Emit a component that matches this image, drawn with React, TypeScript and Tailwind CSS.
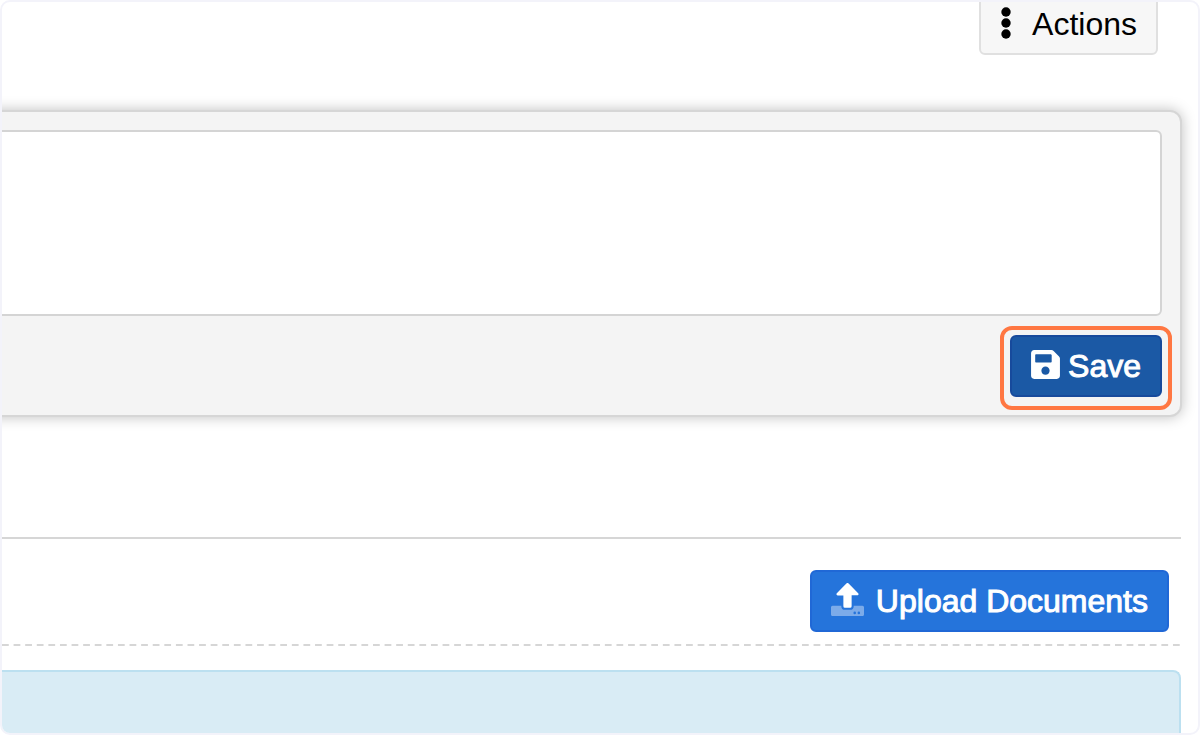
import { FaSave } from "react-icons/fa";

function DotsIcon() {
  return (
    <svg className="mb-[3px] w-3 h-8 shrink-0" viewBox="0 0 12 32" fill="currentColor" aria-hidden="true">
      <circle cx="6" cy="5" r="4.7" />
      <circle cx="6" cy="16" r="4.7" />
      <circle cx="6" cy="27" r="4.7" />
    </svg>
  );
}

function UploadIcon() {
  return (
    <svg className="mb-[3px] w-[33px] h-[33px] shrink-0" viewBox="0 0 512 512" fill="currentColor" aria-hidden="true">
      <path
        opacity="0.4"
        d="M488 352H352v8a56 56 0 0 1-56 56h-80a56 56 0 0 1-56-56v-8H24a24 24 0 0 0-24 24v112a24 24 0 0 0 24 24h464a24 24 0 0 0 24-24V376a24 24 0 0 0-24-24zM368 484a20 20 0 1 1 20-20 20 20 0 0 1-20 20zm64 0a20 20 0 1 1 20-20 20 20 0 0 1-20 20z"
      />
      <path d="M192 360V192h-87.700c-17.800 0-26.700-21.500-14.100-34.100L242.300 5.600a19.400 19.400 0 0 1 27.300 0l152.200 152.200c12.600 12.600 3.700 34.100-14.100 34.100H320v168a24 24 0 0 1-24 24h-80a24 24 0 0 1-24-24z" />
    </svg>
  );
}

export default function App() {
  return (
    <div className="min-h-screen flex flex-col overflow-hidden rounded-[10px] border-2 border-[#f3f3fa] bg-white font-['Liberation_Sans',Arial,sans-serif] text-[32px] leading-10">
      {/* Toolbar */}
      <header className="flex justify-end pr-10">
        <button
          type="button"
          className="-mt-[9px] h-[62px] flex items-center gap-5 rounded-md border-2 border-[#e0e0e0] bg-[#f7f7f7] px-[19px] text-black"
        >
          <DotsIcon />
          Actions
        </button>
      </header>

      {/* Note editor, bleeds off the left edge */}
      <form
        className="mt-[55px] mr-4 -ml-6 rounded-r-xl border-2 border-[#d6d6d6] bg-[#f4f4f4] py-[18px] pr-[18px] shadow-[0_0_14px_rgba(0,0,0,0.25)]"
        onSubmit={(e) => e.preventDefault()}
      >
        <textarea
          aria-label="Note"
          className="block w-full h-[186px] resize-none rounded-r-md border-2 border-[#d4d4d4] bg-white py-4 pr-4 pl-10 outline-none"
        />
        <div className="mt-[19px] flex justify-end">
          <div className="relative">
            <button
              type="submit"
              className="h-[62px] flex items-center gap-2 rounded-md border-2 border-[#174a9c] bg-[#1b59a5] px-[19px] text-white [-webkit-text-stroke:1px_white]"
            >
              <FaSave className="mb-[3px] w-[29px] h-[33px] shrink-0" aria-hidden="true" />
              Save
            </button>
            <span className="pointer-events-none absolute -inset-x-[10px] -top-[9px] -bottom-[13px] rounded-xl border-4 border-[#ff7742]" />
          </div>
        </div>
      </form>

      {/* Documents */}
      <section className="mt-[120px] mr-[17px] flex-1 flex flex-col border-t-2 border-[#d6d6d6]">
        <div className="mt-[31px] flex justify-end pr-3">
          <button
            type="button"
            className="h-[62px] flex items-center gap-3 rounded-md border-2 border-[#2068d6] bg-[#2574db] px-[19px] text-white [-webkit-text-stroke:1px_white]"
          >
            <UploadIcon />
            Upload Documents
          </button>
        </div>
        <div className="mt-3 h-0.5 bg-[linear-gradient(to_right,#d6d6d6_60%,transparent_60%)] bg-[length:calc(100%/101.6)_100%] bg-repeat-x" />
        <div className="mt-6 flex-1 rounded-tr-lg border-t-2 border-r-2 border-[#bce0f0] bg-[#d9ecf5]" />
      </section>
    </div>
  );
}
